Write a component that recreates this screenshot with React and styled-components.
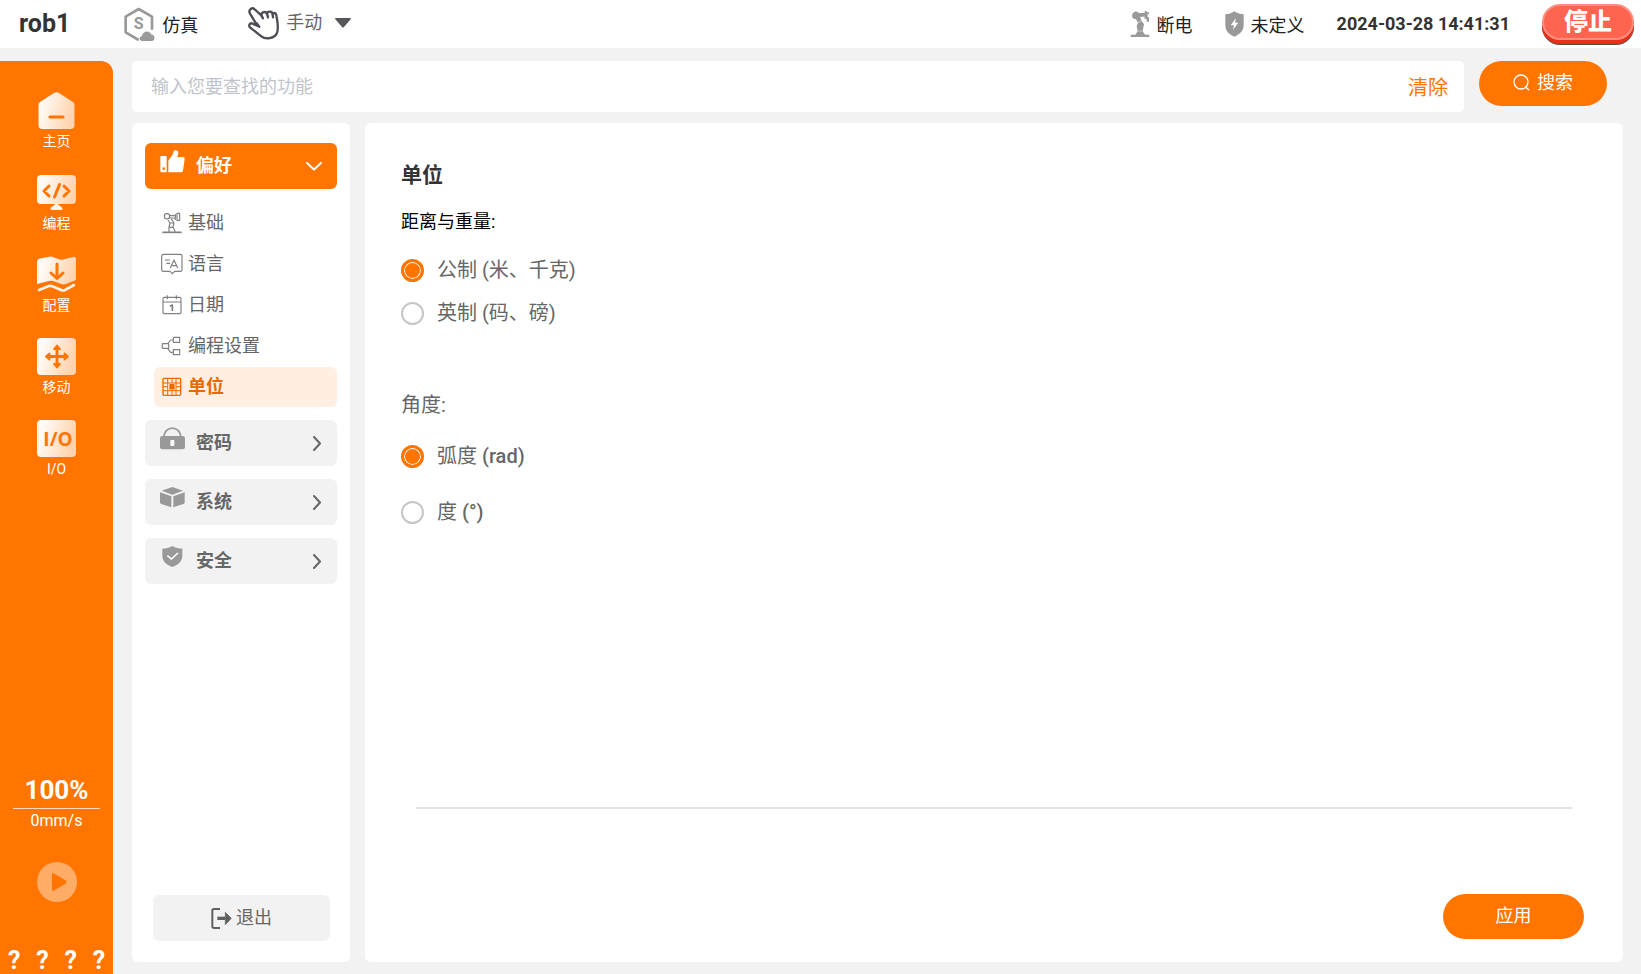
import React, { useId, useState } from 'react';
import styled, { createGlobalStyle, css } from 'styled-components';

const ORANGE = '#ff7500';
const PAGE = '#f2f2f2';
const GREY = '#999999';
const TEXT = '#666666';

const GlobalStyle = createGlobalStyle`
  *, *::before, *::after {
    box-sizing: border-box;
  }

  body {
    margin: 0;
    background: ${PAGE};
    color: ${TEXT};
    font-family: Roboto, 'Noto Sans CJK SC', sans-serif;
    font-size: 18px;
    line-height: 24px;
  }

  button, input {
    font: inherit;
    color: inherit;
  }

  button {
    border: 0;
    padding: 0;
    background: none;
    cursor: pointer;
  }

  svg {
    display: block;
    flex: none;
  }
`;

/* ---------- header icons ---------- */

const SimulationIcon = () => (
  <svg width="31" height="35" viewBox="0 0 93 105" fill="none">
    <path
      d="M44 99 L5 76 V29 L44 6 L84 29 V68"
      stroke={GREY}
      strokeWidth="8"
      strokeLinejoin="round"
    />
    <text x="44" y="65" textAnchor="middle" fontFamily="Roboto" fontSize="48" fontWeight="700" fill={GREY}>
      S
    </text>
    <path
      d="M55 102 C45 102 44 89 54 87 C56 71 77 69 81 82 C94 83 95 102 83 102 Z"
      fill={GREY}
    />
  </svg>
);

const HandIcon = () => (
  <svg width="31" height="34" viewBox="0 0 93 102" fill="none" stroke="#4c4d55" strokeWidth="7" strokeLinecap="round" strokeLinejoin="round">
    <path d="M26 56 L6 23 C0 12 12 2 20 10 L40 28 C40 17 53 15 57 23 C59 14 73 15 74 25 C81 16 85 24 86 33 C90 54 91 73 86 83 C78 98 53 101 40 91 L7 65 C0 59 6 49 14 53 L34 62 L26 52" />
    <path d="M40 28 L45 37 M57 23 L60 34 M74 25 L75 34" />
  </svg>
);

const RobotIcon = () => (
  <svg width="20" height="26" viewBox="0 0 60 78" fill={GREY}>
    <path d="M2 78 V71 H16 L22 62 V54 L20 46 L24 36 L18 24 C4 26 2 6 15 2 C20 1 24 3 26 6 H44 V0 H50 V4 H57 V9 H53 V19 H57 V32 H50 V24 H44 V17 H31 L33 27 L42 40 L39 54 V62 L45 71 H58 V78 Z" />
    <path d="M22 35 L34 30 M22 60 H40" stroke="#fff" strokeWidth="1.500" />
  </svg>
);

const PowerShieldIcon = () => (
  <svg width="19" height="26" viewBox="0 0 57 78">
    <path d="M28 1 C37 7 46 10 56 10 V42 C56 60 44 70 28 77 C12 70 1 60 1 42 V10 C11 10 20 7 28 1 Z" fill={GREY} />
    <path d="M33 21 L17 43 H27 L24 57 L40 35 H30 Z" fill="#fff" />
  </svg>
);

const Caret = () => (
  <svg width="16" height="10" viewBox="0 0 16 10">
    <path d="M1 0 H15 Q17 0 15 2 L9 9 Q8 10 7 9 L1 2 Q-1 0 1 0 Z" fill="#55565c" />
  </svg>
);

const SearchIcon = () => (
  <svg width="17" height="17" viewBox="0 0 17 17" fill="none" stroke="#fff" strokeWidth="1.3" strokeLinecap="round">
    <circle cx="8" cy="8" r="7" />
    <path d="M12.8 13 L15.6 15.8" />
  </svg>
);

/* ---------- sidebar icons ---------- */

const SideIcon = ({ children, height = 37 }) => {
  const id = useId();
  return (
    <svg width="39" height={height} viewBox={`0 0 39 ${height}`} fill="none">
      <defs>
        <linearGradient id={id} x1="0" y1="0" x2="39" y2="10" gradientUnits="userSpaceOnUse">
          <stop offset="0.2" stopColor="#fffaf6" />
          <stop offset="1" stopColor="#ffd3ae" />
        </linearGradient>
      </defs>
      {children(`url(#${id})`)}
    </svg>
  );
};

const HomeIcon = () => (
  <SideIcon>
    {fill => (
      <>
        <path d="M17 1 Q19.500 -0.500 22 1 L36 10 Q37.500 11 37.500 13 V33 Q37.500 37 33.500 37 H5.500 Q1.500 37 1.500 33 V13 Q1.500 11 3 10 Z" fill={fill} />
        <path d="M13 25 H26" stroke={ORANGE} strokeWidth="3.200" strokeLinecap="round" />
      </>
    )}
  </SideIcon>
);

const CodeIcon = () => (
  <SideIcon>
    {fill => (
      <>
        <rect y="1" width="39" height="29" rx="4" fill={fill} />
        <path d="M19.500 29 L25.500 34 Q26 36 24 36 H15 Q13 36 13.500 34 Z" fill="#fff5ec" />
        <path d="M12 12 L7 17 L12 22 M27 12 L32 17 L27 22 M22.500 10.500 L17.500 23" stroke={ORANGE} strokeWidth="3" strokeLinecap="round" strokeLinejoin="round" />
      </>
    )}
  </SideIcon>
);

const ConfigIcon = () => (
  <SideIcon>
    {fill => (
      <>
        <path d="M0 6 Q0 3 3 2.500 L11 1 Q14 0 17 1.500 L23 3.500 Q25 4 28 3 L36 1 Q39 0 39 3 V24 L29 28 Q26 29 23 27.500 L16 25 Q13 24.500 10 25.500 L0 28 Z" fill={fill} />
        <path d="M2 34 L12 30 Q14 29.500 16 30.500 L24 34 Q26 35 28 34 L37 29" stroke="#fff3e8" strokeWidth="2.600" strokeLinecap="round" />
        <path d="M20 8 V22 M14 17 L20 22.500 L26 17" stroke={ORANGE} strokeWidth="3" strokeLinecap="round" strokeLinejoin="round" />
      </>
    )}
  </SideIcon>
);

const MoveIcon = () => (
  <SideIcon>
    {fill => (
      <>
        <rect width="39" height="37" rx="4" fill={fill} />
        <path d="M10 18.500 H30 M20 9 V28" stroke={ORANGE} strokeWidth="2.800" />
        <path
          d="M20 7.500 L23 11 H17 Z M20 29.500 L23 26 H17 Z M9 18.500 L12.500 15.500 V21.500 Z M31 18.500 L27.500 15.500 V21.500 Z"
          fill={ORANGE}
          stroke={ORANGE}
          strokeWidth="1.800"
          strokeLinejoin="round"
        />
      </>
    )}
  </SideIcon>
);

const IoIcon = () => (
  <SideIcon>
    {fill => (
      <>
        <rect width="39" height="37" rx="4" fill={fill} />
        <text x="21" y="26" textAnchor="middle" fontFamily="Open Sans" fontSize="19" fontWeight="700" fill={ORANGE}>
          I/O
        </text>
      </>
    )}
  </SideIcon>
);

const PlayIcon = () => (
  <svg width="40" height="40" viewBox="0 0 40 40">
    <circle cx="20" cy="20" r="20" fill="#ffac66" />
    <path d="M16 12 L28 19 Q29 20 28 21 L16 28 Z" fill={ORANGE} stroke={ORANGE} strokeWidth="2" strokeLinejoin="round" />
  </svg>
);

/* ---------- menu icons ---------- */

const ThumbIcon = () => (
  <svg width="25" height="23" viewBox="0 0 75 69" fill="#fff">
    <path d="M4 18 H17 Q20 18 20 22 V67 H5 Q1 67 1 62 V22 Q1 18 4 18 Z" />
    <path d="M25 67 V34 Q25 30 29 26 L37 16 L41 4 Q43 0 48 1 L53 3 Q56 5 55 10 L52 21 H70 Q75 22 74 27 L69 62 Q68 67 63 67 Z" />
    <circle cx="11" cy="56" r="4" fill={ORANGE} />
  </svg>
);

const LockIcon = () => (
  <svg width="25" height="23" viewBox="0 0 75 69">
    <path d="M12 31 C12 -6 62 -6 62 31" fill="none" stroke={GREY} strokeWidth="5" />
    <rect y="27" width="75" height="40" rx="7" fill={GREY} />
    <rect x="31" y="39" width="12" height="18" rx="3" fill="#fff" />
  </svg>
);

const BoxIcon = () => (
  <svg width="25" height="21" viewBox="0 0 75 63" fill={GREY}>
    <path d="M37 0 L69 11 L37 23 L5 11 Z" />
    <path d="M0 16 L34 28 V61 L4 51 Q0 49 0 46 Z" />
    <path d="M74 16 L40 28 V61 L70 51 Q74 49 74 46 Z" />
  </svg>
);

const SafetyIcon = () => (
  <svg width="25" height="21" viewBox="0 0 75 63">
    <path d="M37 0 C46 6 56 8 67 8 V30 C67 47 52 58 37 63 C22 58 7 47 7 30 V8 C18 8 28 6 37 0 Z" fill={GREY} />
    <path d="M22 29 L34 39 L54 21" fill="none" stroke="#fff" strokeWidth="5" />
  </svg>
);

const LineSvg = ({ children, color = '#808080' }) => (
  <svg width="22" height="22" viewBox="0 0 66 66" fill="none" stroke={color} strokeWidth="3.500" strokeLinejoin="round">
    {children}
  </svg>
);

const BasicIcon = () => (
  <LineSvg>
    <circle cx="18" cy="13" r="8" />
    <path d="M26 11 H43 M26 18 H43 M43 6 V24 M48 4 H56 V25 H48 Z" />
    <path d="M21 24 L27 33 L24 45 V60 M30 20 L39 33 L36 45 L43 60 M27 33 H39 M24 46 H37" />
    <path d="M4 61 H62" strokeWidth="5" />
  </LineSvg>
);

const LanguageIcon = () => (
  <LineSvg>
    <path d="M8 4 H58 Q63 4 63 9 V50 Q63 55 58 55 H41 L34 62 L27 55 H7 Q2 55 2 50 V9 Q2 4 8 4 Z" />
    <path d="M28 45 L39 21 L50 45 M32 38 H46 M12 21 H27 M16 31 H27" />
  </LineSvg>
);

const DateIcon = () => (
  <LineSvg>
    <rect x="6" y="10" width="54" height="49" rx="4" />
    <path d="M6 24 H60 M19 4 V16 M46 4 V16" />
    <path d="M27 37 L34 33 V51" strokeWidth="5" />
  </LineSvg>
);

const ProgramIcon = () => (
  <LineSvg>
    <rect x="4" y="26" width="19" height="14" />
    <rect x="37" y="7" width="19" height="15" />
    <rect x="37" y="44" width="19" height="15" />
    <path d="M20 26 L29 15 H37 M20 40 L29 52 H37" />
  </LineSvg>
);

const UnitIcon = () => (
  <LineSvg color="#e66a00">
    <rect x="6" y="7" width="53" height="51" rx="3" strokeWidth="4" />
    <path d="M6 21 H59 M6 44 H59 M20 7 V58 M45 7 V58 M33 7 V21 M33 44 V58 M6 32 H20 M45 32 H59" strokeWidth="3" />
    <rect x="27" y="26" width="12" height="13" fill="#e66a00" />
  </LineSvg>
);

const ExitIcon = () => (
  <svg width="21" height="21" viewBox="0 0 63 63" fill="none" stroke="#606060" strokeWidth="6">
    <path d="M27 3 H9 Q4 3 4 8 V55 Q4 60 9 60 H27" />
    <path d="M19 31 H43" strokeWidth="10" />
    <path d="M43 13 L61 31 L43 50 Z" fill="#606060" stroke="#606060" strokeWidth="2" strokeLinejoin="round" />
  </svg>
);

const Chevron = ({ open }) => (
  <svg width="16" height="16" viewBox="0 0 16 16" fill="none" stroke="currentColor" strokeWidth="2" strokeLinecap="round" strokeLinejoin="round">
    <path d={open ? 'M1 5 L8 11.500 L15 5' : 'M8 2 L14 8.500 L8 15'} />
  </svg>
);

/* ---------- data ---------- */

const NAV = [
  { label: '主页', Icon: HomeIcon },
  { label: '编程', Icon: CodeIcon },
  { label: '配置', Icon: ConfigIcon },
  { label: '移动', Icon: MoveIcon },
  { label: 'I/O', Icon: IoIcon },
];

const PREFERENCES = [
  { label: '基础', Icon: BasicIcon },
  { label: '语言', Icon: LanguageIcon },
  { label: '日期', Icon: DateIcon },
  { label: '编程设置', Icon: ProgramIcon },
  { label: '单位', Icon: UnitIcon },
];

const GROUPS = [
  { label: '密码', Icon: LockIcon },
  { label: '系统', Icon: BoxIcon },
  { label: '安全', Icon: SafetyIcon },
];

const Radio = ({ name, value, current, onChange, children }) => (
  <RadioLabel>
    <RadioInput name={name} checked={current === value} onChange={() => onChange(value)} />
    <span>{children}</span>
  </RadioLabel>
);

const App = () => {
  const [page, setPage] = useState('单位');
  const [distance, setDistance] = useState('metric');
  const [angle, setAngle] = useState('rad');
  const [query, setQuery] = useState('');

  return (
    <Screen>
      <GlobalStyle />
      <Header>
        <RobotName>rob1</RobotName>
        <Status>
          <SimulationIcon />
          <span>仿真</span>
        </Status>
        <ModeButton type="button">
          <HandIcon />
          <span>手动</span>
          <Caret />
        </ModeButton>
        <HeaderRight>
          <Status>
            <RobotIcon />
            <span>断电</span>
          </Status>
          <Status>
            <PowerShieldIcon />
            <span>未定义</span>
          </Status>
          <Clock>2024-03-28 14:41:31</Clock>
          <StopButton type="button">停止</StopButton>
        </HeaderRight>
      </Header>

      <Body>
        <Sidebar>
          <Nav>
            {NAV.map(({ label, Icon }) => (
              <NavLink href="#" key={label}>
                <Icon />
                {label}
              </NavLink>
            ))}
          </Nav>
          <Speed>
            <strong>100%</strong>
            <span>0mm/s</span>
          </Speed>
          <PlayButton type="button" aria-label="播放">
            <PlayIcon />
          </PlayButton>
          <Unknowns>
            <span>?</span>
            <span>?</span>
            <span>?</span>
            <span>?</span>
          </Unknowns>
        </Sidebar>

        <Content>
          <SearchRow>
            <SearchBox>
              <SearchInput
                aria-label="搜索"
                placeholder="输入您要查找的功能"
                value={query}
                onChange={e => setQuery(e.target.value)}
              />
              <ClearButton type="button" onClick={() => setQuery('')}>
                清除
              </ClearButton>
            </SearchBox>
            <SearchButton type="button">
              <SearchIcon />
              搜索
            </SearchButton>
          </SearchRow>

          <Panels>
            <Menu>
              <GroupButton type="button" $open>
                <ThumbIcon />
                <span>偏好</span>
                <Chevron open />
              </GroupButton>
              <SubMenu>
                {PREFERENCES.map(({ label, Icon }) => (
                  <SubItem
                    type="button"
                    key={label}
                    $active={page === label}
                    onClick={() => setPage(label)}
                  >
                    <Icon />
                    {label}
                  </SubItem>
                ))}
              </SubMenu>
              <Groups>
                {GROUPS.map(({ label, Icon }) => (
                  <GroupButton type="button" key={label}>
                    <Icon />
                    <span>{label}</span>
                    <Chevron />
                  </GroupButton>
                ))}
              </Groups>
              <ExitButton type="button">
                <ExitIcon />
                退出
              </ExitButton>
            </Menu>

            <Main>
              <Title>单位</Title>
              <Fieldset $rowHeight={43}>
                <Legend $dark>距离与重量:</Legend>
                <Radio name="distance" value="metric" current={distance} onChange={setDistance}>
                  公制 (米、千克)
                </Radio>
                <Radio name="distance" value="imperial" current={distance} onChange={setDistance}>
                  英制 (码、磅)
                </Radio>
              </Fieldset>
              <Fieldset $rowHeight={56} $spaced>
                <Legend>角度:</Legend>
                <Radio name="angle" value="rad" current={angle} onChange={setAngle}>
                  弧度 <Medium>(rad)</Medium>
                </Radio>
                <Radio name="angle" value="deg" current={angle} onChange={setAngle}>
                  度 <Medium>(°)</Medium>
                </Radio>
              </Fieldset>
              <Divider />
              <ApplyButton type="button">应用</ApplyButton>
            </Main>
          </Panels>
        </Content>
      </Body>
    </Screen>
  );
};

const Screen = styled.div`
  display: flex;
  flex-direction: column;
  min-height: 100vh;
`;

const Header = styled.header`
  display: flex;
  align-items: center;
  height: 48px;
  padding: 0 7px 0 19px;
  background: #fff;
`;

const RobotName = styled.h1`
  margin: 0 54px 0 0;
  color: #333;
  font-size: 25px;
  font-weight: 700;
`;

const Status = styled.span`
  display: flex;
  align-items: center;
  gap: 7px;
  color: #222;

  span {
    padding-top: 3px;
  }
`;

const ModeButton = styled.button`
  display: flex;
  align-items: center;
  gap: 7px;
  margin-left: 50px;
  padding-bottom: 3px;

  span {
    margin-right: 6px;
  }
`;

const HeaderRight = styled.div`
  display: flex;
  align-items: center;
  gap: 32px;
  margin-left: auto;
`;

const Clock = styled.time`
  color: #333;
  font-weight: 700;
`;

const StopButton = styled.button`
  width: 92px;
  height: 36px;
  margin-bottom: 4px;
  border: 2px solid #ff8f7f;
  border-radius: 18px;
  background: #ff6450;
  box-shadow: 0 4px 0 #e8301a, 0 5px 0 #5d4a45;
  color: #fff;
  font-size: 24px;
  font-weight: 900;
`;

const Body = styled.div`
  display: flex;
  flex: 1;
  padding-top: 13px;
`;

const Sidebar = styled.aside`
  display: flex;
  flex-direction: column;
  align-items: center;
  width: 113px;
  padding: 31px 0 0;
  border-top-right-radius: 12px;
  background: ${ORANGE};
  color: #fff;
`;

const Nav = styled.nav`
  display: flex;
  flex-direction: column;
  gap: 23px;
`;

const NavLink = styled.a`
  display: flex;
  flex-direction: column;
  align-items: center;
  gap: 2px;
  color: #fff;
  font-size: 14px;
  line-height: 20px;
  text-decoration: none;
`;

const Speed = styled.div`
  display: flex;
  flex-direction: column;
  align-self: stretch;
  margin: auto 13px 0;
  text-align: center;

  strong {
    padding-bottom: 6px;
    border-bottom: 1px solid #ffd9b8;
    font-size: 26px;
  }

  span {
    font-size: 16px;
  }
`;

const PlayButton = styled.button`
  margin-top: 29px;
`;

const Unknowns = styled.div`
  display: flex;
  justify-content: space-around;
  align-self: stretch;
  margin-top: 47px;
  padding-bottom: 1px;
  font-size: 25px;
  font-weight: 700;
`;

const Content = styled.div`
  display: flex;
  flex: 1;
  flex-direction: column;
  gap: 11px;
  padding: 0 18px 12px 19px;
`;

const SearchRow = styled.div`
  display: flex;
  gap: 15px;
  padding-right: 16px;
`;

const SearchBox = styled.div`
  display: flex;
  flex: 1;
  align-items: center;
  height: 51px;
  padding: 0 16px 0 19px;
  border-radius: 5px;
  background: #fff;
`;

const SearchInput = styled.input`
  flex: 1;
  border: 0;
  padding: 0;
  outline: 0;
  background: none;

  &::placeholder {
    color: #c0c4cc;
    opacity: 1;
  }
`;

const ClearButton = styled.button`
  padding-top: 2px;
  color: ${ORANGE};
  font-size: 20px;
`;

const pill = css`
  display: flex;
  align-items: center;
  justify-content: center;
  gap: 7px;
  height: 45px;
  padding-bottom: 2px;
  border-radius: 23px;
  background: ${ORANGE};
  color: #fff;
`;

const SearchButton = styled.button`
  ${pill}
  width: 128px;
`;

const Panels = styled.div`
  display: flex;
  flex: 1;
  gap: 15px;
`;

const Menu = styled.aside`
  display: flex;
  flex-direction: column;
  width: 218px;
  padding: 20px 13px 21px;
  border-radius: 6px;
  background: #fff;
`;

const GroupButton = styled.button`
  display: flex;
  align-items: center;
  width: 100%;
  height: 46px;
  padding: 0 15px;
  border-radius: 6px;
  background: ${props => (props.$open ? ORANGE : PAGE)};
  color: ${props => (props.$open ? '#fff' : TEXT)};
  font-weight: 700;
  text-align: left;

  > svg:first-child {
    margin-bottom: 10px;
  }

  > span {
    flex: 1;
    margin-left: 11px;
    padding-bottom: 1px;
  }
`;

const SubMenu = styled.div`
  display: flex;
  flex-direction: column;
  gap: 1px;
  margin: 14px 0 13px 9px;
`;

const SubItem = styled.button`
  display: flex;
  align-items: center;
  gap: 5px;
  height: 40px;
  padding-left: 7px;
  border-radius: 6px;
  background: ${props => (props.$active ? '#ffefe3' : 'transparent')};
  color: ${props => (props.$active ? '#e66a00' : TEXT)};
  font-weight: ${props => (props.$active ? 700 : 400)};
`;

const Groups = styled.div`
  display: flex;
  flex-direction: column;
  gap: 13px;
`;

const ExitButton = styled.button`
  display: flex;
  align-items: center;
  justify-content: center;
  gap: 4px;
  height: 46px;
  margin: auto 7px 0 8px;
  border-radius: 6px;
  background: ${PAGE};
`;

const Main = styled.main`
  display: flex;
  flex: 1;
  flex-direction: column;
  padding: 40px 39px 23px 36px;
  border-radius: 6px;
  background: #fff;
`;

const Title = styled.h2`
  margin: 0 0 23px;
  color: #333;
  font-size: 21px;
  font-weight: 700;
`;

const RadioLabel = styled.label`
  display: flex;
  align-items: center;
  gap: 13px;
  font-size: 20px;

  span {
    padding-bottom: 1px;
  }
`;

const Fieldset = styled.fieldset`
  min-width: 0;
  margin: ${props => (props.$spaced ? '58px' : 0)} 0 0;
  padding: 0;
  border: 0;

  ${RadioLabel} {
    height: ${props => props.$rowHeight}px;
  }
`;

const Legend = styled.legend`
  padding: 0 0 ${props => (props.$dark ? 15 : 11)}px;
  color: ${props => (props.$dark ? '#000' : TEXT)};
  font-size: ${props => (props.$dark ? 18 : 20)}px;
`;

const RadioInput = styled.input.attrs({ type: 'radio' })`
  appearance: none;
  width: 23px;
  height: 23px;
  margin: 0;
  border: 2px solid #c6c6c6;
  border-radius: 50%;
  background: #fff;

  &:checked {
    border-width: 3px;
    border-color: ${ORANGE};
    background: ${ORANGE};
    box-shadow: inset 0 0 0 1px #fff;
  }
`;

const Medium = styled.span`
  font-weight: 500;
`;

const Divider = styled.hr`
  align-self: stretch;
  height: 2px;
  margin: auto 12px 85px 15px;
  border: 0;
  background: #e2e2e2;
`;

const ApplyButton = styled.button`
  ${pill}
  align-self: flex-end;
  width: 141px;
`;

export default App;
